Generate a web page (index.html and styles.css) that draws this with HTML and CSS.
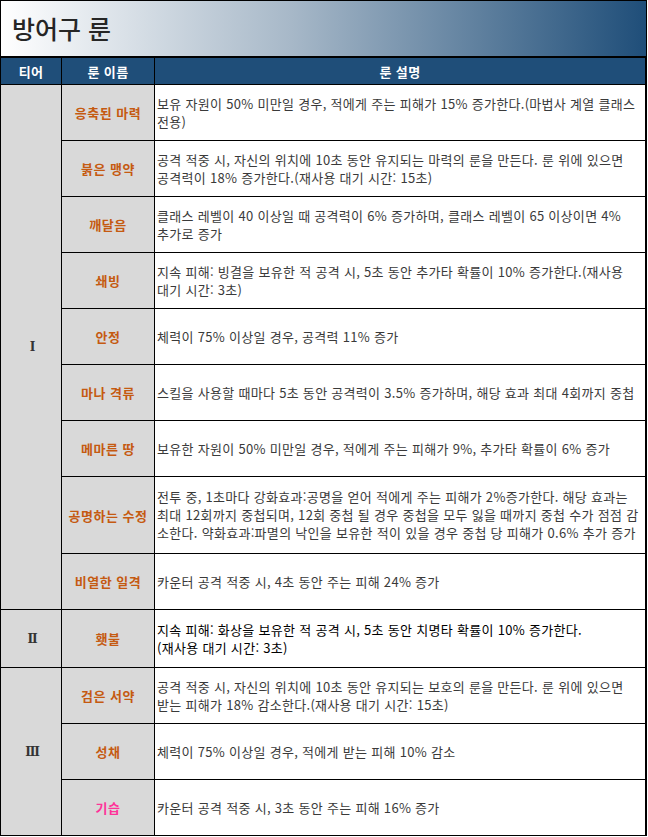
FILE: index.html
```html
<!DOCTYPE html>
<html lang="ko">
<head>
<meta charset="utf-8">
<link rel="stylesheet" href="styles.css">
</head>
<body>
<div class="sheet">
  <div class="title">방어구 룬</div>
  <table class="runes">
    <colgroup>
      <col class="c-tier"><col class="c-name"><col class="c-desc">
    </colgroup>
    <thead>
      <tr><th>티어</th><th>룬 이름</th><th>룬 설명</th></tr>
    </thead>
    <tbody>
      <tr class="r"><td class="tier" rowspan="9">Ⅰ</td><td class="name">응축된 마력</td><td class="desc">보유 자원이 50% 미만일 경우, 적에게 주는 피해가 15% 증가한다.(마법사 계열 클래스<br>전용)</td></tr>
      <tr class="r"><td class="name">붉은 맹약</td><td class="desc">공격 적중 시, 자신의 위치에 10초 동안 유지되는 마력의 룬을 만든다. 룬 위에 있으면<br>공격력이 18% 증가한다.(재사용 대기 시간: 15초)</td></tr>
      <tr class="r"><td class="name">깨달음</td><td class="desc">클래스 레벨이 40 이상일 때 공격력이 6% 증가하며, 클래스 레벨이 65 이상이면 4%<br>추가로 증가</td></tr>
      <tr class="r"><td class="name">쇄빙</td><td class="desc">지속 피해: 빙결을 보유한 적 공격 시, 5초 동안 추가타 확률이 10% 증가한다.(재사용<br>대기 시간: 3초)</td></tr>
      <tr class="r"><td class="name">안정</td><td class="desc">체력이 75% 이상일 경우, 공격력 11% 증가</td></tr>
      <tr class="r"><td class="name">마나 격류</td><td class="desc">스킬을 사용할 때마다 5초 동안 공격력이 3.5% 증가하며, 해당 효과 최대 4회까지 중첩</td></tr>
      <tr class="r"><td class="name">메마른 땅</td><td class="desc">보유한 자원이 50% 미만일 경우, 적에게 주는 피해가 9%, 추가타 확률이 6% 증가</td></tr>
      <tr class="r3"><td class="name">공명하는 수정</td><td class="desc">전투 중, 1초마다 강화효과:공명을 얻어 적에게 주는 피해가 2%증가한다. 해당 효과는<br>최대 12회까지 중첩되며, 12회 중첩 될 경우 중첩을 모두 잃을 때까지 중첩 수가 점점 감<br>소한다. 약화효과:파멸의 낙인을 보유한 적이 있을 경우 중첩 당 피해가 0.6% 추가 증가</td></tr>
      <tr class="r"><td class="name">비열한 일격</td><td class="desc">카운터 공격 적중 시, 4초 동안 주는 피해 24% 증가</td></tr>
      <tr class="r"><td class="tier">Ⅱ</td><td class="name">횃불</td><td class="desc dark">지속 피해: 화상을 보유한 적 공격 시, 5초 동안 치명타 확률이 10% 증가한다.<br>(재사용 대기 시간: 3초)</td></tr>
      <tr class="r"><td class="tier" rowspan="3">Ⅲ</td><td class="name">검은 서약</td><td class="desc">공격 적중 시, 자신의 위치에 10초 동안 유지되는 보호의 룬을 만든다. 룬 위에 있으면<br>받는 피해가 18% 감소한다.(재사용 대기 시간: 15초)</td></tr>
      <tr class="r"><td class="name">성채</td><td class="desc">체력이 75% 이상일 경우, 적에게 받는 피해 10% 감소</td></tr>
      <tr class="r"><td class="name pink">기습</td><td class="desc">카운터 공격 적중 시, 3초 동안 주는 피해 16% 증가</td></tr>
    </tbody>
  </table>
</div>
</body>
</html>
```

FILE: styles.css
```css
html, body {
  margin: 0;
  padding: 0;
  background: #ffffff;
}

body {
  font-family: "Noto Sans CJK KR", "Noto Sans", sans-serif;
  color: #3a3a3a;
}

.sheet {
  width: 645px;
  border: 1px solid #000;
  border-bottom: none;
}

.title {
  height: 55px;
  line-height: 55px;
  padding-left: 11px;
  font-size: 25px;
  font-weight: 500;
  color: #262626;
  background: linear-gradient(to right, #ffffff 0%, #a7b8c8 45%, #1f4e79 100%);
  border-bottom: 1px solid #000;
}

.runes {
  width: 646px;
  margin-left: -1px;
  border-collapse: collapse;
  table-layout: fixed;
}

.c-tier { width: 61px; }
.c-name { width: 93px; }

.runes th,
.runes td {
  border: 1px solid #000;
  vertical-align: middle;
}

.runes th {
  height: 26px;
  padding: 0;
  background: #1f4e79;
  color: #ffffff;
  font-size: 13px;
  font-weight: 700;
  text-align: center;
  letter-spacing: 0.4px;
}

.tier {
  background: #d9d9d9;
  text-align: center;
  font-family: "DejaVu Serif", "Liberation Serif", serif;
  font-weight: 700;
  font-size: 12px;
  color: #333;
  padding-left: 4px;
}

.name {
  background: #d9d9d9;
  text-align: center;
  color: #c55a11;
  font-weight: 700;
  font-size: 13px;
  letter-spacing: 0.5px;
  padding: 0;
}

.name.pink {
  color: #ff3399;
}

.desc {
  font-size: 13px;
  line-height: 18px;
  letter-spacing: 0.3px;
  padding: 0 1px 0 2px;
  color: #3a3a3a;
}

.desc.dark {
  color: #000;
}

.r td { height: 55px; }
.r3 td { height: 76px; }
```
